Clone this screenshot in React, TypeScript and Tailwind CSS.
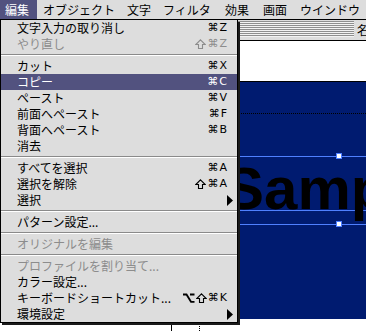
type Item =
  | { sep: true }
  | { label: string; keys?: string; disabled?: boolean; active?: boolean; sub?: boolean };

const items: Item[] = [
  { label: "文字入力の取り消し", keys: "⌘Z" },
  { label: "やり直し", keys: "⇧⌘Z", disabled: true },
  { sep: true },
  { label: "カット", keys: "⌘X" },
  { label: "コピー", keys: "⌘C", active: true },
  { label: "ペースト", keys: "⌘V" },
  { label: "前面へペースト", keys: "⌘F" },
  { label: "背面へペースト", keys: "⌘B" },
  { label: "消去" },
  { sep: true },
  { label: "すべてを選択", keys: "⌘A" },
  { label: "選択を解除", keys: "⇧⌘A" },
  { label: "選択", sub: true },
  { sep: true },
  { label: "パターン設定..." },
  { sep: true },
  { label: "オリジナルを編集", disabled: true },
  { sep: true },
  { label: "プロファイルを割り当て...", disabled: true },
  { label: "カラー設定..." },
  { label: "キーボードショートカット...", keys: "⌥⇧⌘K" },
  { label: "環境設定", sub: true },
];

function SubArrow() {
  return (
    <svg width="6" height="11" viewBox="0 0 6 11" className="fill-black">
      <path d="M0 0L6 5.5L0 11Z" />
    </svg>
  );
}

// shift: outlined up arrow
function ShiftGlyph() {
  return (
    <svg width="11" height="10" viewBox="0 0 11 10" className="mr-[1px] fill-none stroke-current">
      <path d="M5.5 0.8L10.2 5.5H7.5V9.5H3.5V5.5H0.8Z" strokeWidth="1.1" />
    </svg>
  );
}

// option key
function OptionGlyph() {
  return (
    <svg width="12" height="10" viewBox="0 0 12 10" className="mr-[1px] fill-none stroke-current">
      <path d="M0 1.5H3.5L8 8.8H11.5M7 1.5H11.5" strokeWidth="1.8" />
    </svg>
  );
}

function Keys({ keys }: { keys: string }) {
  return (
    <span className="flex items-center pr-[10px] font-['DejaVu_Sans',sans-serif] text-[11px]">
      {Array.from(keys).map((ch, i) =>
        ch === "⇧" ? (
          <ShiftGlyph key={i} />
        ) : ch === "⌥" ? (
          <OptionGlyph key={i} />
        ) : (
          <span key={i} className={ch === "⌘" ? "mr-[1px]" : ""}>
            {ch}
          </span>
        )
      )}
    </span>
  );
}

function EditMenu() {
  return (
    <div className="absolute left-0 top-[20px] w-[238px] border border-t-0 border-black bg-[#dddddd] shadow-[2px_2px_0_#1a1a1a]">
      {items.map((it, i) => {
        if ("sep" in it) {
          return (
            <div key={i} className="flex h-[6px] flex-col justify-center">
              <div className="h-px bg-[#8a8a8a]" />
              <div className="h-px bg-white" />
            </div>
          );
        }
        const color = it.active ? "bg-[#52527f] text-white" : it.disabled ? "text-[#8c8c8c]" : "text-black";
        return (
          <div key={i} className={`flex h-[16px] items-center justify-between pl-[16px] leading-[16px] ${color}`}>
            <span className="whitespace-nowrap">{it.label}</span>
            {it.keys && <Keys keys={it.keys} />}
            {it.sub && (
              <span className="pr-[4px]">
                <SubArrow />
              </span>
            )}
          </div>
        );
      })}
    </div>
  );
}

function MenuBar() {
  return (
    <div className="flex h-[20px] border-b border-black bg-[#dddddd] leading-[19px] whitespace-nowrap">
      <span className="w-[37px] bg-[#52527f] pl-[5px] text-white">編集</span>
      <span className="w-[90px] pl-[6px]">オブジェクト</span>
      <span className="w-[36px]">文字</span>
      <span className="w-[62px]">フィルタ</span>
      <span className="w-[38px]">効果</span>
      <span className="w-[37px]">画面</span>
      <span>ウインドウ</span>
    </div>
  );
}

function DocWindow() {
  return (
    <div className="ml-[171px] flex h-[311px] flex-col border-l border-black">
      <div className="flex h-[21px] flex-none border-b border-black bg-[#dddddd] pt-[1px]">
        <div className="h-[16px] w-[182px] flex-none bg-[repeating-linear-gradient(to_bottom,#8e8e8e_0px,#8e8e8e_1px,#f2f2f2_1px,#f2f2f2_2px)]" />
        <span className="pl-[3px] leading-[18px] whitespace-nowrap">名称未設定-1 @ 100%</span>
      </div>
      <div className="h-[41px] flex-none border-b border-black bg-white" />
      <div className="relative h-[237px] flex-none overflow-hidden bg-[#001b70]">
        <div className="absolute left-0 right-0 top-[31px] border-t border-dotted border-black" />
        <div className="absolute left-0 right-0 top-[74px] h-px bg-[#4f80ff]" />
        <div className="absolute left-0 right-0 top-[128px] h-px bg-[#4f80ff]" />
        <div className="absolute left-0 right-0 top-[142px] h-px bg-[#4f80ff]" />
        <span className="absolute left-[52px] top-[77px] whitespace-nowrap font-['Liberation_Sans',Arial,sans-serif] text-[60px] font-bold leading-[60px] text-black">
          Sample
        </span>
        <div className="absolute left-[164px] top-[71px] h-[6px] w-[6px] border border-[#4f80ff] bg-white" />
        <div className="absolute left-[164px] top-[139px] h-[6px] w-[6px] border border-[#4f80ff] bg-white" />
      </div>
      <div className="flex-1 bg-white">
        <div className="ml-[27px] h-full border-l border-dotted border-black" />
      </div>
    </div>
  );
}

export default function App() {
  return (
    <div className="relative h-[331px] w-[366px] overflow-hidden bg-white font-['Noto_Sans_CJK_JP',sans-serif] text-[12px] text-black">
      <MenuBar />
      <DocWindow />
      <EditMenu />
    </div>
  );
}
